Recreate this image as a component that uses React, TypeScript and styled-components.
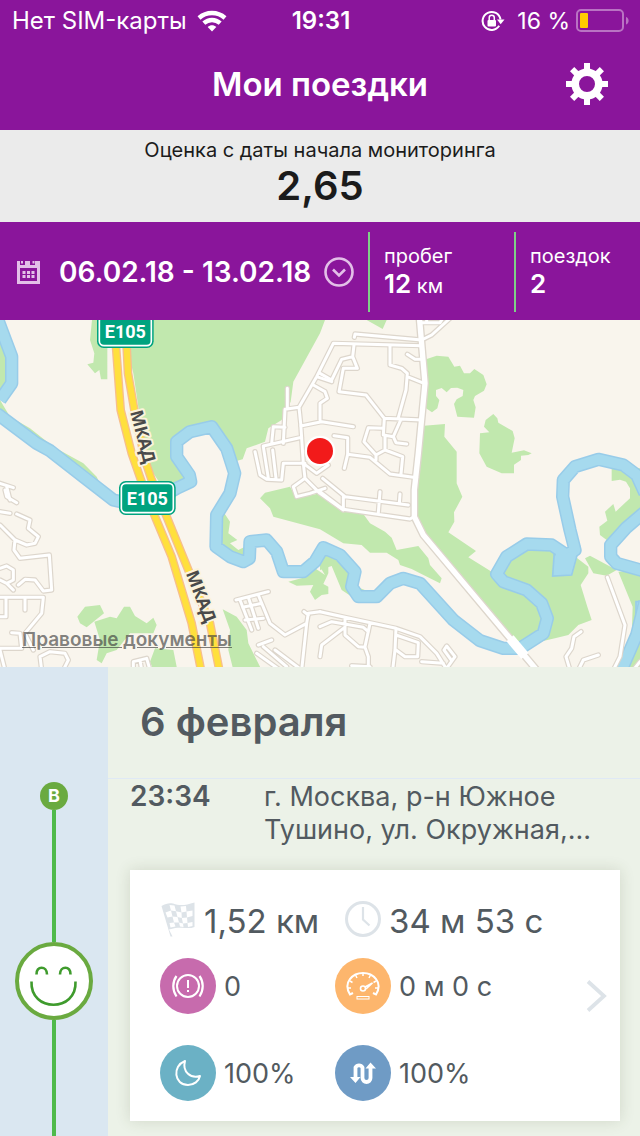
import React from "react";
import styled, { createGlobalStyle } from "styled-components";

const GlobalStyle = createGlobalStyle`
  * { box-sizing: border-box; }
  body {
    margin: 0;
    font-family: Inter, "Noto Sans", sans-serif;
    color: #525a60;
    background: #ecf2e8;
  }
  button, a { font: inherit; color: inherit; }
  svg { display: block; flex-shrink: 0; }
`;

const purple = "#8a159b";

const Page = styled.div`
  min-height: 100vh;
  display: flex;
  flex-direction: column;
`;

const StatusBar = styled.div`
  height: 40px;
  padding: 1px 10px 0 12px;
  display: grid;
  grid-template-columns: 1fr auto 1fr;
  align-items: center;
  background: ${purple};
  color: #fff;
  font-size: 24px;
  line-height: 28px;
`;

const StatusGroup = styled.div<{ $end?: boolean }>`
  display: flex;
  align-items: center;
  justify-content: ${(p) => (p.$end ? "flex-end" : "flex-start")};
  gap: ${(p) => (p.$end ? "6px" : "10px")};
  white-space: nowrap;
`;

const Clock = styled.time`
  font-weight: 600;
`;

const Charge = styled.span`
  padding-left: 6px;
  font-size: 23px;
`;

const Header = styled.header`
  height: 90px;
  padding: 0 32px 3px;
  display: grid;
  grid-template-columns: 42px 1fr 42px;
  align-items: center;
  background: ${purple};
  color: #fff;
`;

const Title = styled.h1`
  grid-column: 2;
  margin: 0;
  font-size: 33px;
  font-weight: 600;
  line-height: 42px;
  text-align: center;
`;

const IconButton = styled.button`
  padding: 0;
  border: 0;
  background: none;
  cursor: pointer;
`;

const Score = styled.section`
  height: 92px;
  padding-top: 8px;
  background: #ebebeb;
  color: #1b1b1b;
  text-align: center;
`;

const ScoreLabel = styled.div`
  font-size: 20px;
  line-height: 24px;
`;

const ScoreValue = styled.div`
  font-size: 40px;
  font-weight: 600;
  line-height: 48px;
`;

const Filter = styled.section`
  height: 98px;
  padding-top: 2px;
  display: flex;
  align-items: center;
  background: ${purple};
  color: #fff;
`;

const Period = styled.button`
  flex: 1;
  min-width: 0;
  padding: 0 14px 0 16px;
  display: flex;
  align-items: center;
  border: 0;
  background: none;
  color: #fff;
  font-size: 28px;
  font-weight: 600;
  line-height: 32px;
  white-space: nowrap;
  cursor: pointer;
`;

const PeriodText = styled.span`
  flex: 1;
  margin-left: 18px;
  text-align: left;
`;

const Stat = styled.div<{ $width: number }>`
  flex: 0 0 ${(p) => p.$width}px;
  height: 80px;
  padding: 10px 0 0 14px;
  border-left: 2px solid #7fd087;
  font-size: 20px;
  line-height: 28px;
`;

const StatValue = styled.strong`
  font-size: 26px;
  font-weight: 600;
`;

const MapPanel = styled.section`
  position: relative;
  height: 347px;
  overflow: hidden;
  background: #f9f5ed;
`;

const Legal = styled.a`
  position: absolute;
  left: 22px;
  bottom: 15px;
  color: rgba(60, 60, 60, 0.65);
  font-size: 19px;
  font-weight: 600;
  line-height: 24px;
`;

const Trips = styled.main`
  flex: 1;
  display: grid;
  grid-template-columns: 108px 1fr;
`;

const Rail = styled.div`
  padding-top: 115px;
  display: flex;
  flex-direction: column;
  align-items: center;
  background: #dae7f1;
`;

const Pin = styled.span`
  width: 28px;
  height: 28px;
  border-radius: 50%;
  background: #6aaa40;
  color: #fff;
  font-size: 18px;
  font-weight: 700;
  line-height: 28px;
  text-align: center;
`;

const Track = styled.span<{ $length?: number }>`
  width: 4px;
  flex: ${(p) => (p.$length ? `0 0 ${p.$length}px` : "1")};
  background: #4fba4a;
`;

const Day = styled.section`
  min-width: 0;
  padding-bottom: 15px;
  background: #ecf2e8;
`;

const DayTitle = styled.h2`
  height: 112px;
  margin: 0;
  padding: 29px 32px 0;
  border-bottom: 1px solid #dfe9f5;
  font-size: 40px;
  font-weight: 600;
  line-height: 52px;
`;

const Start = styled.div`
  padding: 1px 20px 0 22px;
  display: grid;
  grid-template-columns: 134px 1fr;
  font-size: 27px;
  line-height: 33px;
`;

const StartTime = styled.time`
  font-size: 28px;
  font-weight: 600;
`;

const Address = styled.p`
  margin: 0;
`;

const Card = styled.a`
  height: 251px;
  margin: 24px 20px 0 22px;
  padding: 0 12px 0 30px;
  display: flex;
  align-items: center;
  justify-content: space-between;
  background: #fff;
  box-shadow: 0 0 14px rgba(60, 80, 40, 0.16);
  text-decoration: none;
`;

const Metrics = styled.div`
  padding-top: 1px;
`;

const Totals = styled.div`
  height: 56px;
  margin-bottom: 11px;
  display: grid;
  grid-template-columns: 185px auto;
  align-items: center;
  font-size: 33px;
  line-height: 40px;
  white-space: nowrap;
`;

const TotalValue = styled.span`
  padding-top: 4px;
`;

const Scores = styled.div`
  display: grid;
  grid-template-columns: 175px auto;
  row-gap: 31px;
  font-size: 27px;
  white-space: nowrap;
`;

const Metric = styled.div`
  display: flex;
  align-items: center;
  gap: 8px;
`;

const Badge = styled.span<{ $color: string }>`
  width: 56px;
  height: 56px;
  display: grid;
  place-items: center;
  border-radius: 50%;
  background: ${(p) => p.$color};
`;

type Tile = { x: number; y: number; d: string };

const greens: Tile[] = [
  { x: 0, y: 0, d: "M276 0L270 60 283 100 280 128 262 133 285 160 298 150 303 178H322V85L380 60V0Z" },
  { x: 0, y: 0, d: "M370 0H975L960 40 880 185 872 245 845 300 805 325 795 365 740 385 728 418 700 425 640 315 530 355 520 400 575 470 560 490 480 490 440 430 400 160 380 80Z" },
  { x: 0, y: 0, d: "M0 60L25 95 25 180 0 215ZM0 240L30 290 90 325 160 380 250 430 290 470 312 515 240 480 150 400 0 300Z" },
  { x: 960, y: 0, d: "M140 0L188 27 200 0ZM0 0H12L0 33Z" },
  { x: 960, y: 0, d: "M318 118L350 107 385 110 403 140 420 137 432 160 450 160 463 147 490 165 500 193 492 212 465 228 460 240 467 262 462 293 412 290 402 252 410 238 428 228 430 210 412 203 393 204 380 217 365 204 348 210 348 228 358 240 352 265 336 277 318 265Z" },
  { x: 960, y: 0, d: "M520 282L532 295 535 308 578 333 584 355 575 398 612 391 635 400 625 405 603 407V420L582 434V460H545L500 440 478 400 480 340 508 337 492 320 497 300Z" },
  { x: 960, y: 0, d: "M312 317L375 312 373 350 410 395V490L427 530 402 577 403 605 385 637 468 693 445 712 515 755 600 665 740 690 805 740 805 760 782 795 802 860 815 900 775 915 745 945 705 955 640 970 570 960 310 650 280 590Z" },
  { x: 960, y: 0, d: "M875 445H960V575L860 660 840 645 838 620 862 602 855 575 880 552 887 575 930 535V505L918 485 900 479 875 483Z" },
  { x: 960, y: 510, d: "M795 205L810 197 890 240 860 257 820 250ZM895 245L938 350 935 440 895 540H960V240ZM725 540L745 535 760 540Z" },
  { x: 0, y: 510, d: "M780 25L795 8 870 -10 890 25 960 10 1030 50 1090 72 1110 100 1155 125 1175 143 1190 180 1255 168 1285 205 1290 225 1325 265 1320 280 1260 250 1235 237 1200 225 1195 210 1160 188H1110L1085 165 1030 160 960 118 820 80 810 55Z" },
  { x: 0, y: 510, d: "M670 65L690 95 685 130 712 150 690 160 715 180 735 170 740 140 780 135 760 160 740 205 700 205 655 170 660 90ZM985 225L960 230 975 255 945 235 915 262 865 275 890 287 940 285 930 305 945 330 965 315 985 312V290L970 282 985 250Z" },
  { x: 960, y: 510, d: "M35 228L65 300 110 330 170 338 185 320 110 290 90 220 0 190 0 240Z" },
  { x: 0, y: 510, d: "M232 380L255 350 300 345 312 370 260 412 240 400ZM283 395L330 380 350 385 372 350 390 350 405 378 440 400 460 383 470 405 460 430 390 430 350 480 320 490 305 520 290 510 300 450ZM450 515L465 475 520 480 532 540H460ZM668 358L710 380 740 420 745 460 785 540H700L685 480 690 420Z" },
];

const rivers = [
  "M-10 -10L5 30 35 110V190L0 240",
  "M-10 280L50 325 110 370 150 392 250 470 340 540 430 560 530 505 572 485 568 465 530 410V365L570 335 635 320 680 385 704 460 690 520 650 585 648 680 690 710 730 725 748 715 750 665 800 660 830 695 850 755H910L945 725 970 683 1020 705 1065 755 1055 800 1075 830H1130L1170 790 1210 775 1260 790 1360 900 1440 962 1510 985H1560L1630 940 1642 895 1625 850 1580 810 1510 785 1490 762 1520 710 1580 672 1655 675 1700 705 1725 690 1710 630 1688 530 1690 480 1725 440 1795 418 1870 435 1910 465 1935 520",
  "M1935 575L1880 622 1832 675V710L1850 730 1940 755",
  "M1935 845L1910 945 1860 1060",
];

const streets: Tile[] = [
  { x: 0, y: 0, d: "M862 205V265M850 370L855 268 897 262 950 170 1000 70 1265 77M897 262L902 310 910 430 915 475M902 318L965 305 1060 320M815 370L820 320 855 322M790 378L905 352M765 395L780 465 800 478 845 480 850 430 915 430M790 380L805 475M818 390L828 475M915 475L880 500 890 530 930 520 975 505M915 475L960 520 1030 570M910 430L950 460 985 435M940 195L975 215 982 235 960 250V300M950 170L995 185M0 490L40 503M20 500L30 540" },
  { x: 960, y: 0, d: "M103 52L105 42 305 60 335 45 390 -5M300 8H360L365 0M320 8V0M102 75L98 110 65 118 35 180 0 160M98 110L112 145 70 145 57 215 138 225 193 295 305 300M210 77V135L245 145 262 160 258 210 235 293M262 170L312 190M262 103L285 118H305M193 295L190 345 220 350 242 300M220 350L228 368 260 372M190 325L145 323 132 365 168 405V420M195 348V390L168 405M195 390L248 410 243 462M42 347L83 353V403L73 445M83 403L150 412 210 462 290 473M8 475L75 530 265 555M0 515L70 568 270 597 283 590M70 530V568M180 515L175 578M240 522L238 550" },
  { x: 0, y: 510, d: "M0 65L30 70M15 0L20 20 50 38M50 72L90 90 85 115 115 140 105 160 80 165 45 150 0 105M45 150L42 180 60 205 148 195 155 300 130 303 105 270 75 268 55 285M0 235L20 228 40 240V270L20 280 0 270M20 280L40 300M0 322H130L125 370 75 430 100 480M75 322V360M18 322V380H0M0 475H65L60 430 35 428M0 480L15 540M125 540L120 500 150 485 195 490 205 510 190 540M400 540V515L440 505 450 540M420 510L425 540" },
  { x: 0, y: 510, d: "M708 330L805 305M720 330L755 420M745 322L775 415M775 315L810 400 855 435 920 400 925 370 960 365M735 390L790 385M728 352L785 340M775 465L815 450M770 490L840 540M790 470L860 530M825 480L905 540 920 400M912 365L925 375" },
  { x: 960, y: 510, d: "M0 365L75 382 228 415 300 440 350 490 375 530M75 382V435L115 470 135 472 145 500V540M150 400L135 470M0 410L35 395 130 412 145 425M70 415L5 465 0 500M228 415L225 480 218 540M228 435L295 458 293 500H255L225 478M305 515L370 520M380 535L405 500 380 468 372 480 395 512M862 262L915 405 900 500 880 540M783 425L762 440 755 475 738 500 750 540M775 540L790 510 835 495M95 527L150 530M940 540L960 515" },
];

const highway =
  "M338 0L348 80 362 270 395 400 430 500 465 590 515 710 575 910 605 1060M372 0L380 80 384 160 403 270 435 420 455 480 500 590 565 750 630 910 660 1060";

function Layer({ tiles, stroke, width }: { tiles: Tile[]; stroke: string; width: number }) {
  return (
    <g fill="none" stroke={stroke} strokeWidth={width} strokeLinecap="round" strokeLinejoin="round">
      {tiles.map((t, i) => (
        <path key={i} d={t.d} transform={`translate(${t.x} ${t.y})`} />
      ))}
    </g>
  );
}

function Shield({ x, y }: { x: number; y: number }) {
  return (
    <g transform={`translate(${x} ${y})`}>
      <rect width="170" height="102" rx="20" fill="#00a37f" />
      <rect x="7" y="7" width="156" height="88" rx="14" fill="none" stroke="#fff" strokeWidth="5" />
      <text x="85" y="71" textAnchor="middle" fill="#fff" fontFamily="Roboto, sans-serif" fontWeight="700" fontSize="54">
        E105
      </text>
    </g>
  );
}

function RoadName({ x, y, angle }: { x: number; y: number; angle: number }) {
  return (
    <text
      transform={`translate(${x} ${y}) rotate(${angle})`}
      fill="#4a4a4a"
      stroke="#fbf3dc"
      strokeWidth="12"
      strokeLinejoin="round"
      paintOrder="stroke"
      fontFamily='"Open Sans", sans-serif'
      fontWeight="700"
      fontSize="53"
    >
      МКАД
    </text>
  );
}

function TripMap() {
  const mainRoad = "M1258 -10L1275 190 1255 400 1243 510V590L1270 645 1530 955 1610 1050";
  return (
    <svg width="100%" height="347" viewBox="0 0 1920 1041" preserveAspectRatio="xMidYMid slice" role="img" aria-label="Карта поездок">
      <g fill="#c1e8ae">
        {greens.map((g, i) => (
          <path key={i} d={g.d} transform={`translate(${g.x} ${g.y})`} />
        ))}
      </g>
      <path d="M1663 695L1700 688 1738 680 1715 765 1658 768Z" fill="#a6daee" stroke="#98cce9" strokeWidth="5" />
      <path d="M1908 845H1930V880H1908Z" fill="#a6daee" stroke="#98cce9" strokeWidth="5" />
      <g fill="none" strokeLinejoin="round">
        {rivers.map((d) => <path key={d} d={d} stroke="#98cce9" strokeWidth="40" />)}
        {rivers.map((d) => <path key={d} d={d} stroke="#a6daee" strokeWidth="31" />)}
      </g>
      <path d="M1668 700L1700 700 1733 690 1713 760 1662 763Z" fill="#a6daee" />
      <Layer tiles={streets} stroke="#ddd6cc" width={16} />
      <Layer tiles={[{ x: 0, y: 0, d: mainRoad }]} stroke="#ddd6cc" width={24} />
      <Layer tiles={streets} stroke="#fff" width={9} />
      <Layer tiles={[{ x: 0, y: 0, d: mainRoad }]} stroke="#fff" width={16} />
      <path d="M1530 955L1575 1008" stroke="#fff" strokeWidth="28" />
      <path d={highway} fill="none" stroke="#f7bf8b" strokeWidth="26" />
      <path d={highway} fill="none" stroke="#ffe03d" strokeWidth="18" />
      <RoadName x={390} y={276} angle={75} />
      <RoadName x={557} y={760} angle={69} />
      <Shield x={291} y={-18} />
      <Shield x={357} y={483} />
      <circle cx="960" cy="393" r="46" fill="#fff" />
      <circle cx="960" cy="393" r="39" fill="#f21a1a" />
    </svg>
  );
}

const WifiIcon = () => (
  <svg width="30" height="22" viewBox="0 0 30 22" fill="none" stroke="#fff" strokeWidth="4.4">
    <path d="M2 8C9.400 1.400 20.600 1.400 28 8" />
    <path d="M6.800 13.200C11.600 8.900 18.400 8.900 23.200 13.200" />
    <path d="M15 21.500L10.700 16.900C13.200 14.700 16.800 14.700 19.300 16.900Z" fill="#fff" stroke="none" />
  </svg>
);

const RotationLockIcon = () => (
  <svg width="24" height="22" viewBox="0 0 24 22" fill="none">
    <path d="M18.200 15.800A9 9 0 1 1 19.500 9.500" stroke="#fff" strokeWidth="2" />
    <path d="M16 9.500H23.500L19.700 14.200Z" fill="#fff" />
    <rect x="6.500" y="10" width="8.500" height="6.500" rx="1" fill="#fff" />
    <path d="M8.200 10.500V7.800A2.500 2.500 0 0 1 13.300 7.800V10.500" stroke="#fff" strokeWidth="1.500" />
  </svg>
);

const BatteryIcon = () => (
  <svg width="54" height="24" viewBox="0 0 54 24">
    <rect x="1" y="1" width="46" height="21" rx="4" fill="none" stroke="#b973c3" strokeWidth="2" />
    <rect x="4" y="4" width="8" height="15" rx="1" fill="#ffcc00" />
    <path d="M50 8C53.500 9 53.500 14.500 50 15.500Z" fill="#b973c3" />
  </svg>
);

const GearIcon = () => (
  <svg width="42" height="42" viewBox="-21 -21 42 42">
    <circle r="11.800" fill="none" stroke="#fff" strokeWidth="7.600" />
    {[0, 45, 90, 135, 180, 225, 270, 315].map((a) => (
      <path key={a} d="M-3 -21H3V-14H-3Z" fill="#fff" transform={`rotate(${a})`} />
    ))}
  </svg>
);

const CalendarIcon = () => (
  <svg width="25" height="24" viewBox="0 0 25 24">
    <path d="M1 1H4V5H9V1H14V5H19V1H22V1H24V24H1Z" fill="#e3bfe8" />
    <path d="M5 1H7V3.500H5ZM16.500 1H18.500V3.500H16.500Z" fill="#e3bfe8" />
    <path d="M4 8H21V21H4Z" fill={purple} />
    <path d="M6.500 11H9.500V14H6.500ZM11 11H14V14H11ZM15.500 11H18.500V14H15.500ZM6.500 15H9.500V18H6.500ZM11 15H14V18H11ZM15.500 15H18.500V18H15.500Z" fill="#e3bfe8" />
  </svg>
);

const ExpandIcon = () => (
  <svg width="30" height="30" viewBox="0 0 30 30" fill="none" stroke="#e3bfe8">
    <circle cx="15" cy="15" r="13.500" strokeWidth="2.600" />
    <path d="M9 12.500L15 18.500 21 12.500" strokeWidth="2.600" />
  </svg>
);

const SmileIcon = () => (
  <svg width="78" height="78" viewBox="0 0 78 78" fill="none" stroke="#3f9b2d" strokeWidth="2.600">
    <circle cx="39" cy="39" r="37" fill="#fff" stroke="#6aaa40" strokeWidth="4" />
    <path d="M21.500 32.500C21 23.500 32 23.500 32 32.500M45 32.500C45 23.500 56 23.500 55.500 32.500M16.500 39.500C15 70.500 62 70.500 60.500 39.500" />
  </svg>
);

const FlagIcon = () => (
  <svg width="36" height="36" viewBox="0 0 36 36">
    <path d="M1.500 5C6 2.500 9 1.800 13 2.500C20 5 25 4.500 34.500 1.500V26C27 29 22 24.500 9 28.500L12.500 35.500H10.500Z" fill="#dde3e8" />
    <path d="M9.500 4L14.500 4.500 16 10.200 11 9.600ZM20.500 5.500L26 5 26.500 10.500 21.500 11.500ZM5.500 11.500L11 9.600 12.500 15.500 7.500 16.500ZM16 10.200L21.500 11.500 21.800 17 17.500 16ZM26.500 10.500L32.500 9.500V15L27 16.500ZM12.500 15.500L17.500 16 19 21.500 14 21.500ZM21.800 17L27 16.500 27.500 22 23 22.500ZM9.500 22L14 21.500 15.500 25.500 10.500 26.500ZM19 21.500L23 22.500 23.500 26 20 25.500ZM27.500 22L32.500 21V25L28 26Z" fill="#fff" />
  </svg>
);

const ClockIcon = () => (
  <svg width="36" height="36" viewBox="0 0 36 36" fill="none" stroke="#dde3e8">
    <circle cx="18" cy="18" r="16.500" strokeWidth="3" />
    <path d="M18 6V18.500L24.500 24.500" strokeWidth="2.200" />
  </svg>
);

const BrakeIcon = () => (
  <svg width="34" height="26" viewBox="0 0 34 26" fill="none" stroke="#fff" strokeWidth="2">
    <circle cx="17" cy="13" r="11" />
    <path d="M17 7V15M17 17V19" />
    <path d="M5.500 3C1.200 9 1.200 17 5.500 23.500M28.500 3C32.800 9 32.800 17 28.500 23.500" strokeWidth="2.200" />
  </svg>
);

const SpeedIcon = () => (
  <svg width="34" height="30" viewBox="0 0 34 30" fill="none" stroke="#fff" strokeWidth="2">
    <path d="M7 22L4 23.500C-3.500 11 7 2 17 2S37.500 11 30 23.500L27 22" />
    <path d="M17 2V5M9.500 4L11 7M24.500 4L23 7M4 10L6.500 11.500M30 10L27.500 11.500M2 17H5M32 17H29" strokeWidth="1.500" />
    <circle cx="17" cy="17.500" r="2.500" strokeWidth="1.600" />
    <path d="M19 16L26.500 12 20 18" strokeWidth="1.500" />
    <rect x="11" y="25.500" width="12" height="2.500" strokeWidth="1" />
  </svg>
);

const MoonIcon = () => (
  <svg width="28" height="28" viewBox="0 0 28 28" fill="none" stroke="#fff" strokeWidth="2" strokeLinejoin="round">
    <path d="M11 2C-2 7 0 26 14 26C20 26 25 22 26 17C17 20 8 13 11 2Z" />
  </svg>
);

const TurnsIcon = () => (
  <svg width="28" height="26" viewBox="0 0 28 26" fill="none" stroke="#fff" strokeWidth="3.800">
    <path d="M6.500 19V7.500A4 4 0 0 1 13.500 7.500V18A4 4 0 0 0 21.500 18V6" />
    <path d="M1 17H11.500L6.500 23ZM16.500 8.500H27L21.500 2.500Z" fill="#fff" stroke="none" />
  </svg>
);

const ChevronIcon = () => (
  <svg width="22" height="32" viewBox="0 0 22 32" fill="none" stroke="#dde3e8" strokeWidth="3.800">
    <path d="M2 1.500L18 16 2 30.500" />
  </svg>
);

export default function App() {
  return (
    <Page>
      <GlobalStyle />
      <StatusBar>
        <StatusGroup>
          Нет SIM-карты
          <WifiIcon />
        </StatusGroup>
        <Clock>19:31</Clock>
        <StatusGroup $end>
          <RotationLockIcon />
          <Charge>16 %</Charge>
          <BatteryIcon />
        </StatusGroup>
      </StatusBar>
      <Header>
        <Title>Мои поездки</Title>
        <IconButton type="button" aria-label="Настройки">
          <GearIcon />
        </IconButton>
      </Header>
      <Score>
        <ScoreLabel>Оценка с даты начала мониторинга</ScoreLabel>
        <ScoreValue>2,65</ScoreValue>
      </Score>
      <Filter>
        <Period type="button">
          <CalendarIcon />
          <PeriodText>06.02.18 - 13.02.18</PeriodText>
          <ExpandIcon />
        </Period>
        <Stat $width={146}>
          пробег
          <br />
          <StatValue>12</StatValue> км
        </Stat>
        <Stat $width={126}>
          поездок
          <br />
          <StatValue>2</StatValue>
        </Stat>
      </Filter>
      <MapPanel>
        <TripMap />
        <Legal href="#legal">Правовые документы</Legal>
      </MapPanel>
      <Trips>
        <Rail>
          <Pin>B</Pin>
          <Track $length={132} />
          <SmileIcon />
          <Track />
        </Rail>
        <Day>
          <DayTitle>6 февраля</DayTitle>
          <Start>
            <StartTime>23:34</StartTime>
            <Address>г. Москва, р-н Южное Тушино, ул. Окружная,...</Address>
          </Start>
          <Card href="#trip">
            <Metrics>
              <Totals>
                <Metric>
                  <FlagIcon />
                  <TotalValue>1,52 км</TotalValue>
                </Metric>
                <Metric>
                  <ClockIcon />
                  <TotalValue>34 м 53 с</TotalValue>
                </Metric>
              </Totals>
              <Scores>
                <Metric>
                  <Badge $color="#c76bad"><BrakeIcon /></Badge>0
                </Metric>
                <Metric>
                  <Badge $color="#fdb66d"><SpeedIcon /></Badge>0 м 0 с
                </Metric>
                <Metric>
                  <Badge $color="#6bb1c5"><MoonIcon /></Badge>100%
                </Metric>
                <Metric>
                  <Badge $color="#6f9bc5"><TurnsIcon /></Badge>100%
                </Metric>
              </Scores>
            </Metrics>
            <ChevronIcon />
          </Card>
        </Day>
      </Trips>
    </Page>
  );
}
